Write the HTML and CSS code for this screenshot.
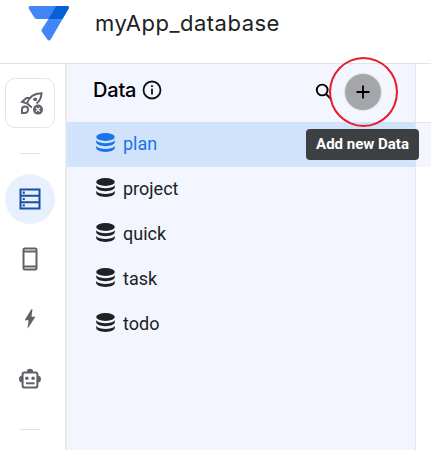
FILE: index.html
```html
<!DOCTYPE html>
<html lang="en">
<head>
<meta charset="utf-8">
<title>myApp_database</title>
<link rel="stylesheet" href="styles.css">
</head>
<body>
<svg class="defs" aria-hidden="true">
  <symbol id="db" viewBox="0 0 19 19">
    <ellipse cx="9.500" cy="4" rx="9.300" ry="3.900"/>
    <path d="M.2 7.300C2 9.500 5.500 10.300 9.500 10.300S17 9.500 18.800 7.300V9.100C18.800 11.500 14.700 13.200 9.500 13.200S.2 11.500.2 9.100Z"/>
    <path d="M.2 13C2 15.200 5.500 16 9.500 16S17 15.200 18.800 13V14.800C18.800 17.200 14.700 18.900 9.500 18.900S.2 17.200.2 14.800Z"/>
  </symbol>
</svg>
<header class="topbar">
  <svg class="logo" width="42" height="38" viewBox="0 0 42 38">
    <path fill="#4285f4" d="M3 2H39Q42 2 40.300 5L23 35Q21 38 19 35L14 28Q13 26.500 14 25L20.500 15H9Q7.500 15 6.500 13.700L1 5Q-.5 2 3 2Z"/>
    <path fill="#0560d8" d="M29.500 2H39Q42 2 40.300 5L34.500 15H20.500L27 4Q28 2 29.500 2Z"/>
  </svg>
  <h1 class="title">myApp_database</h1>
</header>
<main class="body">
  <nav class="rail">
    <div class="deploy">
      <svg width="24" height="24" viewBox="0 0 24 24" fill="none" stroke="#5f6368" stroke-width="2">
        <path d="M7 12.400C9 6 13.500 2.300 21.500 2.200C21.200 7.500 19 10.500 16.500 12.500M6.600 12L11.800 16.400"/>
        <path d="M10 7L6.500 6.900L2 10.800L6.600 12.400"/>
        <path d="M2 22V18.500C2 16.500 3.500 15.400 5 15.400S8 16.500 8 18.300C8 20.500 6.500 22 4.500 22Z"/>
        <circle cx="15.200" cy="8.300" r="1.900" fill="#5f6368" stroke="none"/>
        <circle cx="18" cy="18.600" r="5" fill="#5f6368" stroke="none"/>
        <path stroke="#fff" stroke-width="1.300" d="M16 16.600L20 20.600M20 16.600L16 20.600"/>
      </svg>
    </div>
    <hr class="sep">
    <div class="item active">
      <svg width="22" height="22" viewBox="0 0 22 22">
        <path fill="#174ea6" d="M.5 .5H21.500V21.500H.5Z"/>
        <path fill="#e8f0fe" d="M2.500 2.500H19.500V6.700H2.500ZM2.500 8.800H19.500V13.200H2.500ZM2.500 15.300H19.500V19.500H2.500Z"/>
        <path fill="#174ea6" d="M3.700 3.600H5.800V5.700H3.700ZM3.700 9.900H5.800V12H3.700ZM3.700 16.300H5.800V18.400H3.700Z"/>
      </svg>
    </div>
    <div class="item">
      <svg width="16" height="24" viewBox="0 0 16 24">
        <rect x="1.500" y="1.500" width="13" height="21" rx="1.200" fill="#fff" stroke="#5f6368" stroke-width="2"/>
        <path stroke="#5f6368" stroke-width="2" d="M2 4.500H14M2 19.500H14"/>
      </svg>
    </div>
    <div class="item">
      <svg width="12" height="20" viewBox="0 0 12 20"><path fill="#5f6368" d="M7.300 .3L.6 11.300H4.600L3.500 19.700L11.500 7.700H7.500L8.500 .3Z"/></svg>
    </div>
    <div class="item">
      <svg width="24" height="22" viewBox="0 0 24 22">
        <path fill="#5f6368" d="M8.800 4A3.200 3.200 0 0 1 15.200 4ZM4.500 7.500V14.500A3.500 3.500 0 0 1 4.500 7.500ZM19.500 7.500V14.500A3.500 3.500 0 0 0 19.500 7.500Z"/>
        <rect x="4.600" y="4.500" width="14.800" height="15" rx="1.800" fill="#fff" stroke="#5f6368" stroke-width="2"/>
        <circle cx="8.900" cy="10.200" r="1.700" fill="#5f6368"/><circle cx="15.100" cy="10.200" r="1.700" fill="#5f6368"/>
        <path stroke="#5f6368" stroke-width="2" d="M8 15.300H16.500"/>
      </svg>
    </div>
    <hr class="sep last">
  </nav>
  <section class="panel">
    <div class="panel-head">
      <h2 class="heading">Data</h2>
      <svg class="info" width="20" height="20" viewBox="0 0 20 20">
        <circle cx="10" cy="10" r="8.500" fill="none" stroke="#111" stroke-width="1.800"/>
        <path stroke="#111" stroke-width="1.800" d="M10 5.200V7M10 8.700V14.500"/>
      </svg>
      <svg class="search" width="18" height="18" viewBox="0 0 18 18" fill="none" stroke="#000" stroke-width="1.900">
        <circle cx="7.200" cy="7" r="5.400"/><path d="M11 11L16.300 16.300"/>
      </svg>
      <div class="add">
        <svg width="14" height="14" viewBox="0 0 14 14"><path stroke="#000" stroke-width="1.800" d="M7 .5V13.500M.5 7H13.500"/></svg>
        <div class="ring"></div>
        <div class="tooltip">Add new Data</div>
      </div>
    </div>
    <ul class="list">
      <li class="row selected"><svg class="db"><use href="#db"/></svg><span>plan</span></li>
      <li class="row"><svg class="db"><use href="#db"/></svg><span>project</span></li>
      <li class="row"><svg class="db"><use href="#db"/></svg><span>quick</span></li>
      <li class="row"><svg class="db"><use href="#db"/></svg><span>task</span></li>
      <li class="row"><svg class="db"><use href="#db"/></svg><span>todo</span></li>
    </ul>
  </section>
  <section class="content"><div class="strip"></div></section>
</main>
</body>
</html>
```
FILE: styles.css
```css
* { box-sizing: border-box; }
body {
  margin: 0;
  height: 450px;
  display: flex;
  flex-direction: column;
  overflow: hidden;
  background: #fff;
  color: #202124;
  font-family: Roboto, "Liberation Sans", sans-serif;
}
svg { display: block; flex: none; }
.defs { position: absolute; width: 0; height: 0; }
.topbar {
  height: 64px;
  flex: none;
  display: flex;
  align-items: flex-start;
  padding: 4px 0 0 28px;
  border-bottom: 1px solid #e2e3e6;
}
.title {
  margin: 4px 0 0 25px;
  font: 400 22px/30px Inter, sans-serif;
  letter-spacing: 0.5px;
}
.body { flex: 1; display: flex; }
.rail {
  width: 67px;
  flex: none;
  border-right: 2px solid #e9eaec;
  padding: 14px 0 0 5px;
}
.deploy {
  width: 50px;
  height: 50px;
  border: 1px solid #e4e5e7;
  border-radius: 10px;
  display: grid;
  place-items: center;
  padding-left: 3px;
}
.sep {
  width: 20px;
  height: 1px;
  margin: 25px 0 20px 15px;
  border: 0;
  background: #dfe1e3;
}
.sep.last { margin-top: 25px; }
.item {
  width: 50px;
  height: 50px;
  margin-bottom: 10px;
  display: grid;
  place-items: center;
}
.item.active { border-radius: 50%; background: #e8f0fe; }
.panel { width: 348px; flex: none; background: #f3f6fe; }
.panel-head {
  height: 58px;
  display: flex;
  align-items: center;
  padding: 0 34px 4px 26px;
}
.heading {
  margin: 0 0 3px;
  width: 44px;
  font: 500 20px/26px Inter, sans-serif;
  letter-spacing: -0.2px;
  color: #000;
}
.info { margin: 0 0 2px 5px; }
.search { margin: 1px 12px 0 auto; }
.add {
  position: relative;
  width: 36px;
  height: 36px;
  margin-top: 2px;
  border-radius: 50%;
  background: #a5a6a9;
  box-shadow: 0 0 1px 1px #e1e4ea;
  display: grid;
  place-items: center;
}
.ring {
  position: absolute;
  left: -16px;
  top: -17px;
  width: 69px;
  height: 70px;
  border: 2px solid #e81c2b;
  border-radius: 50%;
}
.tooltip {
  position: absolute;
  left: -39px;
  top: 55px;
  width: 113px;
  height: 31px;
  border-radius: 4px;
  background: #3c4043;
  color: #fff;
  font-size: 15px;
  font-weight: 700;
  line-height: 31px;
  text-align: center;
  white-space: nowrap;
}
.list { margin: 0; padding: 0; list-style: none; }
.row {
  height: 45px;
  display: flex;
  align-items: center;
  gap: 8px;
  padding: 0 0 4px 29px;
  font-size: 18px;
  line-height: 24px;
}
.row span { margin-top: 3px; }
.selected { background: #d1e3fb; color: #1a73e8; }
.db { width: 19px; height: 19px; fill: currentColor; }
.content { flex: 1; border-left: 1px solid #e4e6ea; padding-top: 58px; }
.strip { height: 45px; border-top: 1px solid #e1e4e8; background: #f3f6fe; }
```
